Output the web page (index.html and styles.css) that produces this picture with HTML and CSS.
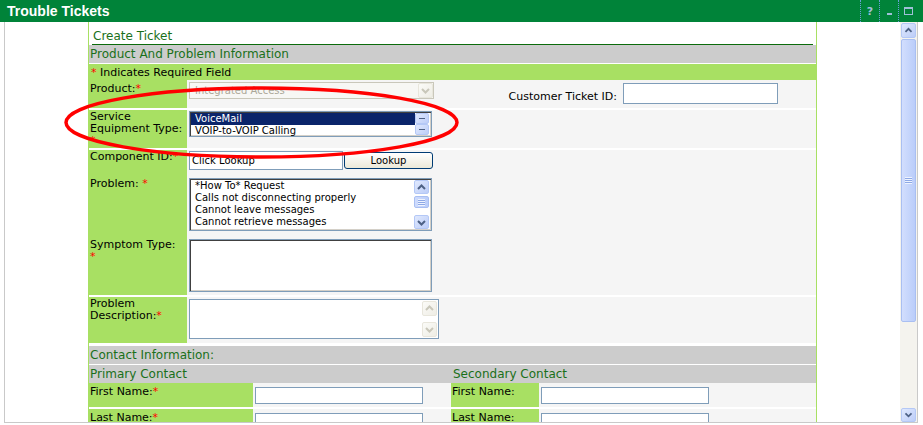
FILE: index.html
```html
<!DOCTYPE html>
<html lang="en">
<head>
<meta charset="utf-8">
<title>Trouble Tickets</title>
<link rel="stylesheet" href="styles.css">
</head>
<body>
<header class="titlebar">
  <span class="title">Trouble Tickets</span>
  <div class="tools">
    <span class="tool tool-help">?</span>
    <span class="tool"><span class="tool-min"></span></span>
    <span class="tool"><span class="tool-max"></span></span>
  </div>
</header>
<div class="window">
  <div class="content">
    <div class="form">
      <div class="form-title">Create Ticket</div>
      <div class="sec-head">Product And Problem Information</div>
      <div class="req-row"><span class="req">*</span> Indicates Required Field</div>

      <div class="row row-product">
        <div class="lab pad2">Product:<span class="req">*</span></div>
        <div class="val val-flex">
          <div class="select-dis">
            <span class="select-text">Integrated Access</span>
            <span class="sbtn sbtn-dis"><svg width="15" height="15" viewBox="0 0 15 15"><path d="M4 6 L7.5 9.5 L11 6" fill="none" stroke="#c9c7ba" stroke-width="2"/></svg></span>
          </div>
          <div class="cust">
            <span class="cust-label">Customer Ticket ID:</span>
            <div class="textbox cust-input"></div>
          </div>
        </div>
      </div>

      <div class="row row-service">
        <div class="lab">Service<br>Equipment Type:<br><span class="req">*</span></div>
        <div class="val">
          <div class="listbox list-service">
            <div class="items">
              <div class="item selected">VoiceMail</div>
              <div class="item">VOIP-to-VOIP Calling</div>
            </div>
            <div class="mini-scroll">
              <span class="mini-btn"><span class="dash"></span></span>
              <span class="mini-btn"><span class="dash"></span></span>
            </div>
          </div>
        </div>
      </div>

      <div class="group">
        <div class="row row-component">
          <div class="lab">Component ID:<span class="req">*</span></div>
          <div class="val val-flex">
            <div class="textbox comp-input">Click Lookup</div>
            <div class="btn">Lookup</div>
          </div>
        </div>
        <div class="row row-problem">
          <div class="lab">Problem: <span class="req">*</span></div>
          <div class="val">
            <div class="listbox list-problem">
              <div class="items">
                <div class="item">*How To* Request</div>
                <div class="item">Calls not disconnecting properly</div>
                <div class="item">Cannot leave messages</div>
                <div class="item">Cannot retrieve messages</div>
              </div>
              <div class="lscroll">
                <span class="sbtn"><svg width="15" height="13" viewBox="0 0 15 13"><path d="M4 8 L7.5 4.5 L11 8" fill="none" stroke="#4d6185" stroke-width="2"/></svg></span>
                <span class="lthumb"><span class="grip"></span></span>
                <span class="ltrack"></span>
                <span class="sbtn"><svg width="15" height="13" viewBox="0 0 15 13"><path d="M4 5 L7.5 8.5 L11 5" fill="none" stroke="#4d6185" stroke-width="2"/></svg></span>
              </div>
            </div>
          </div>
        </div>
        <div class="row row-symptom">
          <div class="lab">Symptom Type:<br><span class="req">*</span></div>
          <div class="val">
            <div class="listbox list-symptom"></div>
          </div>
        </div>
      </div>

      <div class="row row-desc">
        <div class="lab">Problem<br>Description:<span class="req">*</span></div>
        <div class="val">
          <div class="textarea">
            <div class="ta-scroll">
              <span class="sbtn sbtn-dis"><svg width="15" height="15" viewBox="0 0 15 15"><path d="M4 9 L7.5 5.5 L11 9" fill="none" stroke="#c9c7ba" stroke-width="2"/></svg></span>
              <span class="sbtn sbtn-dis"><svg width="15" height="15" viewBox="0 0 15 15"><path d="M4 6 L7.5 9.5 L11 6" fill="none" stroke="#c9c7ba" stroke-width="2"/></svg></span>
            </div>
          </div>
        </div>
      </div>

      <div class="sec-head sec-contact">Contact Information:</div>
      <div class="sec-head sub-head">
        <span class="sub-primary">Primary Contact</span>
        <span class="sub-secondary">Secondary Contact</span>
      </div>

      <div class="row row-contact">
        <div class="lab lab-wide pad2">First Name:<span class="req">*</span></div>
        <div class="val val-mid"><div class="textbox name-input"></div></div>
        <div class="lab lab-sec pad2">First Name:</div>
        <div class="val"><div class="textbox name-input"></div></div>
      </div>
      <div class="row row-contact">
        <div class="lab lab-wide pad2">Last Name:<span class="req">*</span></div>
        <div class="val val-mid"><div class="textbox name-input"></div></div>
        <div class="lab lab-sec pad2">Last Name:</div>
        <div class="val"><div class="textbox name-input"></div></div>
      </div>
    </div>
  </div>
  <div class="vscroll">
    <span class="vbtn"><svg width="15" height="15" viewBox="0 0 15 15"><path d="M4 9 L7.5 5.5 L11 9" fill="none" stroke="#4d6185" stroke-width="2"/></svg></span>
    <span class="vthumb"><span class="grip"></span></span>
    <span class="vtrack"></span>
    <span class="vbtn vbtn-down"><svg width="15" height="14" viewBox="0 0 15 14"><path d="M4 5 L7.5 8.5 L11 5" fill="none" stroke="#4d6185" stroke-width="2"/></svg></span>
  </div>
</div>
<svg class="annotation" width="923" height="425" viewBox="0 0 923 425">
  <ellipse cx="261.5" cy="122.5" rx="195.5" ry="34.5" fill="none" stroke="#f00" stroke-width="3.5"/>
</svg>
</body>
</html>
```
FILE: styles.css
```css
* { box-sizing: border-box; }
html, body { margin: 0; padding: 0; background: #fff; }
body {
  position: relative;
  width: 923px;
  height: 425px;
  overflow: hidden;
  font-family: "DejaVu Sans", Verdana, sans-serif;
  font-size: 11px;
  color: #000;
}

/* title bar */
.titlebar {
  height: 22px;
  background: #008339;
  display: flex;
  align-items: center;
  justify-content: space-between;
}
.title {
  font-family: "Liberation Sans", Arial, sans-serif;
  font-weight: bold;
  font-size: 14px;
  color: #fff;
  padding-left: 7px;
}
.tools { display: flex; align-self: stretch; margin-right: 6px; }
.tool {
  width: 19px;
  border-left: 1px dotted #6a9fd6;
  display: flex;
  align-items: center;
  justify-content: center;
}
.tool-help { color: #9fc0d8; font-weight: bold; font-size: 11px; padding-top: 1px; }
.tool-min { width: 5px; height: 2px; background: #9fc0d8; margin-top: 5px; }
.tool-max { width: 9px; height: 8px; border: 1px solid #9fc0d8; border-top-width: 2px; }

/* window frame */
.window {
  margin-left: 4px;
  width: 914px;
  height: 401px;
  border: 1px solid #c9c9c9;
  border-top: 0;
  display: flex;
}
.content { width: 895px; height: 100%; overflow: hidden; }
.form {
  width: 729px;
  height: 100%;
  margin: 0 auto;
  border-left: 1px solid #a8e063;
  border-right: 1px solid #a8e063;
  background: #fff;
}
.form-title {
  height: 23px;
  margin: 0 3px;
  padding: 7px 0 0 1px;
  border-bottom: 1px solid #0b6b0b;
  font-size: 12px;
  line-height: 14px;
  color: #1a701a;
}
.sec-head {
  height: 18px;
  background: #ccc;
  color: #1a701a;
  font-size: 12px;
  line-height: 19px;
  padding-left: 1px;
  margin-bottom: 1px;
}
.req-row {
  height: 16px;
  line-height: 17px;
  background: #a8e063;
  padding-left: 2px;
}
.req { color: #f00; }

/* rows */
.row { display: flex; }
.lab {
  width: 98px;
  flex: none;
  background: #a8e063;
  padding: 1px 1px 0;
  line-height: 12px;
}
.pad2 { padding-top: 3px; }
.val { flex: 1; background: #f5f5f5; padding-left: 2px; }
.val-flex { display: flex; align-items: flex-start; }

.row-product { height: 28px; margin-bottom: 2px; }
.row-service { height: 38px; margin-bottom: 2px; }
.group { margin-bottom: 2px; }
.row-component { height: 27px; }
.row-problem { height: 61px; }
.row-symptom { height: 57px; }
.row-desc { height: 46px; margin-bottom: 3px; }

/* controls */
.textbox {
  border: 1px solid #7f9db9;
  background: #fff;
  font-size: 10px;
  padding-left: 2px;
  display: flex;
  align-items: center;
}
.select-dis {
  margin-top: 2px;
  width: 245px;
  height: 17px;
  border: 1px solid #c9c7ba;
  background: #f7f7f4;
  display: flex;
  align-items: center;
  justify-content: space-between;
}
.select-text { font-size: 10px; color: #aca899; padding-left: 5px; }
.sbtn {
  width: 15px;
  height: 15px;
  flex: none;
  border: 1px solid #b4c8f6;
  border-radius: 2px;
  background: linear-gradient(135deg, #e0e9fe, #bccdf8);
  display: flex;
  align-items: center;
  justify-content: center;
}
.sbtn svg { flex: none; }
.sbtn-dis {
  border-color: #e8e6dc;
  background: linear-gradient(135deg, #fbfbf8, #eeede5);
}
.select-dis .sbtn { height: 15px; margin-right: 0; }

.cust { margin-left: auto; margin-right: 38px; margin-top: 3px; display: flex; align-items: flex-start; }
.cust-label { padding-top: 7px; margin-right: 6px; white-space: nowrap; }
.cust-input { width: 155px; height: 21px; }

.listbox {
  border: 1px solid #7f9db9;
  background: #fff;
  box-shadow: inset 1px 1px 0 #404040, inset -1px -1px 0 #d4d0c8;
  padding: 1px;
  display: flex;
  width: 243px;
}
.items { flex: 1; }
.item { font-size: 10px; line-height: 12px; padding-left: 4px; white-space: nowrap; }
.item.selected { background: #0a246a; color: #fff; }

.list-service { margin-top: 1px; height: 26px; }
.mini-scroll { width: 15px; display: flex; flex-direction: column; justify-content: space-between; padding: 0 1px 0 0; }
.mini-btn {
  height: 11px;
  border: 1px solid #b4c8f6;
  border-radius: 2px;
  background: linear-gradient(135deg, #e0e9fe, #bccdf8);
  display: flex;
  align-items: center;
  justify-content: center;
}
.dash { width: 6px; height: 1px; background: #4d6185; }

.comp-input { margin-top: 1px; width: 154px; height: 19px; }
.btn {
  margin: 2px 0 0 1px;
  width: 89px;
  height: 17px;
  border: 1px solid #003c74;
  border-radius: 3px;
  background: linear-gradient(#fff, #ece9d8);
  font-size: 10px;
  display: flex;
  align-items: center;
  justify-content: center;
}

.list-problem { margin-top: 1px; height: 53px; }
.lscroll { width: 16px; display: flex; flex-direction: column; padding-right: 1px; }
.lscroll .sbtn { height: 14px; }
.lthumb {
  margin-top: 2px;
  height: 12px;
  border: 1px solid #a9bff2;
  border-radius: 2px;
  background: linear-gradient(90deg, #cfdcfd, #bacdfa);
  display: flex;
  align-items: center;
  justify-content: center;
}
.ltrack { flex: 1; }
.grip {
  width: 7px;
  height: 7px;
  background: repeating-linear-gradient(#eef3fe 0 1px, #8da8e6 1px 2px);
}

.list-symptom { margin-top: 1px; height: 53px; }

.textarea {
  margin-top: 2px;
  width: 250px;
  height: 40px;
  border: 1px solid #7f9db9;
  background: #fff;
  display: flex;
  justify-content: flex-end;
}
.ta-scroll { width: 16px; display: flex; flex-direction: column; justify-content: space-between; padding: 1px 1px 1px 0; }

.sec-contact { margin-bottom: 1px; }
.sub-head { display: flex; margin-bottom: 0; padding-left: 0; }
.sub-primary { width: 362px; padding-left: 1px; }
.sub-secondary { padding-left: 2px; }

.row-contact { height: 24px; margin-bottom: 2px; }
.lab-wide { width: 164px; }
.lab-sec { width: 88px; }
.val-mid { flex: none; width: 198px; }
.name-input { margin-top: 4px; width: 168px; height: 17px; }

/* page scrollbar */
.vscroll {
  width: 17px;
  padding: 1px 1px 0 1px;
  display: flex;
  flex-direction: column;
  background: #f4f3ee;
}
.vbtn {
  height: 15px;
  border: 1px solid #b4c8f6;
  border-radius: 2px;
  background: linear-gradient(135deg, #e0e9fe, #bccdf8);
  display: flex;
  align-items: center;
  justify-content: center;
}
.vbtn-down { height: 14px; }
.vthumb {
  margin-top: 1px;
  height: 283px;
  border: 1px solid #a9bff2;
  border-radius: 2px;
  background: linear-gradient(90deg, #d2defd, #bacdfa);
  display: flex;
  align-items: center;
  justify-content: center;
}
.vtrack { flex: 1; }

.annotation { position: absolute; left: 0; top: 0; pointer-events: none; }
```
